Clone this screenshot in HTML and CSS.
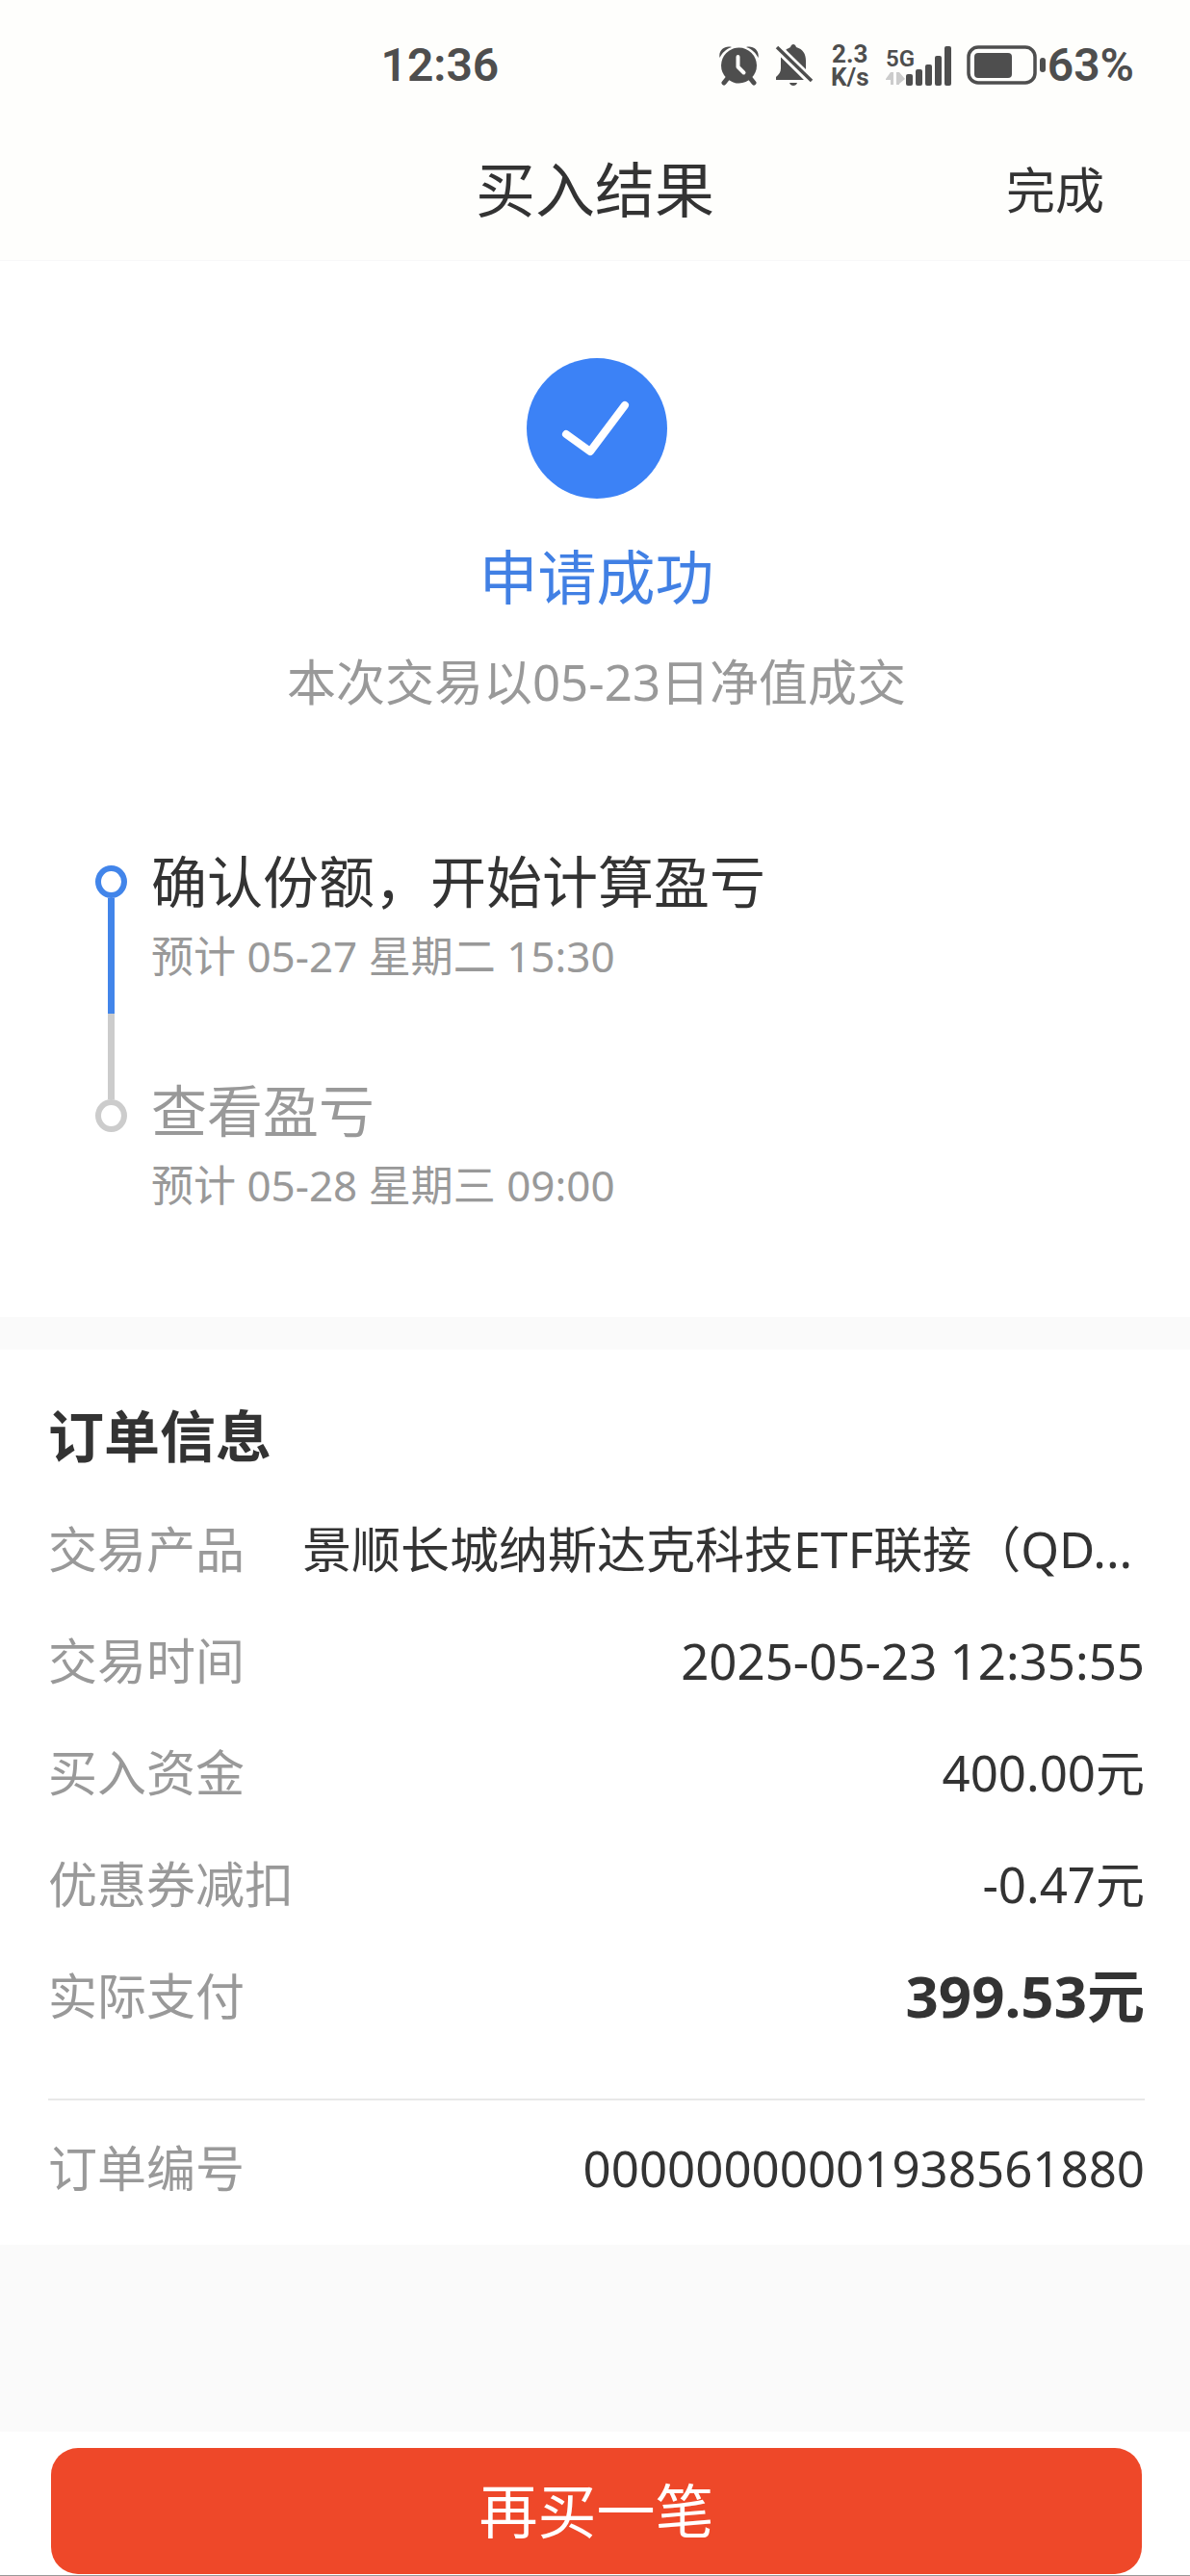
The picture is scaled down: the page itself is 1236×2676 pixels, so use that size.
FILE: index.html
```html
<!DOCTYPE html>
<html lang="zh-CN">
<head>
<meta charset="utf-8">
<meta name="viewport" content="width=device-width, initial-scale=1">
<title>买入结果</title>
<link rel="stylesheet" href="styles.css">
</head>
<body>
<header class="top">
  <div class="status">
    <time class="status-time">12:36</time>
    <div class="status-icons">
      <svg class="icon" width="41" height="42" viewBox="0 0 41 42" aria-hidden="true">
        <g stroke="#4e4e4e" stroke-width="5" stroke-linecap="round"><path d="M9 34l-4 5M32 34l4 5"/></g>
        <circle cx="20.500" cy="21" r="18.500" fill="#4e4e4e"/>
        <path d="M0.500 13C-1 5 6 0 13 2 7 4 3 8 0.500 13zM40.500 13C42 5 35 0 28 2c6 2 10 6 12.500 11z" fill="#4e4e4e"/>
        <path d="M19.500 12v10.500l6 6" fill="none" stroke="#fefefc" stroke-width="4" stroke-linecap="round" stroke-linejoin="round"/>
      </svg>
      <svg class="icon" width="42" height="44" viewBox="0 0 42 44" aria-hidden="true">
        <path d="M12 6C14 4 16 4 17 3c1-4 5-4 6 0 7 2 10 7 10 14v10zM7 13l24 24H2v-3c3-3 5-5 5-9zM16 40h8c-1 4-7 4-8 0z" fill="#4e4e4e"/>
        <path d="M4 4l35 34" stroke="#fefefc" stroke-width="9"/>
        <path d="M3 3l36 35" stroke="#4e4e4e" stroke-width="3.500"/>
      </svg>
      <div class="speed"><span>2.3</span><span>K/s</span></div>
      <svg class="icon" width="68" height="44" viewBox="0 0 68 44" role="img" aria-label="5G">
        <text class="network" x="0" y="23">5G</text>
        <g fill="#4e4e4e">
          <rect x="21" y="31" width="7" height="12" rx="2"/>
          <rect x="31" y="26" width="7" height="17" rx="2"/>
          <rect x="41" y="21" width="7" height="22" rx="2"/>
          <rect x="51" y="12" width="7" height="31" rx="2"/>
          <rect x="61" y="2" width="7" height="41" rx="2"/>
        </g>
        <path d="M0 36l5-7h3v13H5v-5H0zM11 29h3l6 7-6 5v1h-3z" fill="#ccc"/>
      </svg>
      <div class="battery">
        <svg class="icon" width="82" height="42" viewBox="0 0 82 42" aria-hidden="true">
          <rect x="2" y="2" width="69" height="37" rx="10" fill="none" stroke="#4e4e4e" stroke-width="3.500"/>
          <rect x="8" y="8" width="39" height="26" rx="4" fill="#4e4e4e"/>
          <rect x="76" y="13" width="6" height="15" rx="3" fill="#4e4e4e"/>
        </svg>
        <span>63%</span>
      </div>
    </div>
  </div>
  <nav class="nav">
    <h1 class="nav-title">买入结果</h1>
    <button class="nav-done" type="button">完成</button>
  </nav>
</header>

<main class="content">
  <section class="result">
    <svg class="result-icon" width="146" height="146" viewBox="0 0 146 146" aria-hidden="true">
      <circle cx="73" cy="73" r="73" fill="#3c82f6"/>
      <path d="M41 79l25 18 36-48" fill="none" stroke="#fff" stroke-width="8" stroke-linecap="round" stroke-linejoin="round"/>
    </svg>
    <h2 class="result-title">申请成功</h2>
    <p class="result-note">本次交易以05-23日净值成交</p>
    <ol class="steps">
      <li class="step step-active">
        <div class="rail"><i class="dot"></i><i class="line line-active"></i><i class="line line-rest"></i></div>
        <div class="step-body">
          <h3 class="step-title">确认份额，开始计算盈亏</h3>
          <p class="step-date">预计 05-27 星期二 15:30</p>
        </div>
      </li>
      <li class="step">
        <div class="rail"><i class="line line-stub"></i><i class="dot"></i></div>
        <div class="step-body">
          <h3 class="step-title">查看盈亏</h3>
          <p class="step-date">预计 05-28 星期三 09:00</p>
        </div>
      </li>
    </ol>
  </section>

  <section class="order">
    <h2 class="order-title">订单信息</h2>
    <dl class="rows">
      <div class="row row-product"><dt>交易产品</dt><dd>景顺长城纳斯达克科技ETF联接（QD...</dd></div>
      <div class="row"><dt>交易时间</dt><dd>2025-05-23 12:35:55</dd></div>
      <div class="row"><dt>买入资金</dt><dd>400.00元</dd></div>
      <div class="row"><dt>优惠券减扣</dt><dd>-0.47元</dd></div>
      <div class="row"><dt>实际支付</dt><dd class="total">399.53元</dd></div>
    </dl>
    <dl class="rows rows-id">
      <div class="row"><dt>订单编号</dt><dd>00000000001938561880</dd></div>
    </dl>
  </section>
</main>

<footer class="footer">
  <button class="buy" type="button">再买一笔</button>
</footer>
</body>
</html>
```

FILE: styles.css
```css
* {
  box-sizing: border-box;
  margin: 0;
  padding: 0;
}

body {
  min-height: 100vh;
  display: flex;
  flex-direction: column;
  background: #fafafa;
  color: #333;
  font-family: "Noto Sans", "Noto Sans CJK SC", sans-serif;
  font-size: 51px;
  line-height: 72px;
}

button {
  border: 0;
  font: inherit;
  color: inherit;
}

h1, h2, h3 {
  font-weight: 400;
}

.icon {
  display: block;
}

/* Status bar and navigation */
.top {
  background: #fefefc;
  border-bottom: 1px solid #f8f8f8;
}

.status {
  display: flex;
  align-items: center;
  justify-content: space-between;
  height: 136px;
  padding: 0 58px 0 32%;
  color: #4e4e4e;
  font-family: Roboto, sans-serif;
  font-size: 48px;
  font-weight: 600;
  line-height: 56px;
}

.status-icons {
  display: flex;
  align-items: center;
  gap: 16px;
}

.speed {
  display: flex;
  flex-direction: column;
  align-items: center;
  width: 42px;
  font-size: 26px;
  font-weight: 700;
  line-height: 24px;
}

.network {
  font-size: 24px;
  fill: #4e4e4e;
}

.battery {
  display: flex;
  align-items: center;
  gap: 2px;
}

.nav {
  display: grid;
  grid-template-columns: 1fr auto 1fr;
  align-items: center;
  height: 134px;
  padding: 0 89px 12px;
}

.nav-title {
  grid-column: 2;
  font-size: 62px;
  line-height: 84px;
}

.nav-done {
  justify-self: end;
  background: none;
}

/* Result summary */
.result {
  display: flex;
  flex-direction: column;
  align-items: center;
  padding: 101px 45px 107px 48px;
  background: #fff;
}

.result-title {
  margin-top: 40px;
  color: #4180e4;
  font-size: 61px;
  line-height: 84px;
}

.result-note {
  margin-top: 30px;
  color: #999;
}

/* Progress steps */
.steps {
  align-self: stretch;
  margin-top: 133px;
  padding-left: 51px;
  list-style: none;
}

.step {
  display: flex;
  gap: 25px;
  color: #999;
}

.step-active {
  min-height: 238px;
}

.rail {
  display: flex;
  flex-direction: column;
  align-items: center;
  width: 33px;
}

.dot {
  flex: none;
  width: 33px;
  height: 34px;
  border: 6px solid #ccc;
  border-radius: 50%;
}

.line {
  width: 7px;
  background: #ccc;
}

.line-active {
  height: 120px;
  background: #4285ea;
}

.line-rest {
  flex: 1;
}

.line-stub {
  height: 27px;
}

.step-active .rail {
  padding-top: 22px;
}

.step-active .dot {
  border-color: #4285ea;
}

.step-title {
  font-size: 58px;
  line-height: 78px;
}

.step-active .step-title {
  color: #333;
}

.step-date {
  margin-top: 8px;
  font-size: 44px;
  line-height: 60px;
}

/* Order details */
.order {
  margin-top: 34px;
  padding: 50px 47px 22px 50px;
  background: #fff;
}

.order-title {
  margin-bottom: 19px;
  font-size: 58px;
  font-weight: 700;
  line-height: 80px;
}

.row {
  display: flex;
  align-items: center;
  justify-content: space-between;
  height: 116px;
}

.row dt {
  color: #999;
}

.row dd {
  white-space: nowrap;
}

.row-product {
  justify-content: flex-start;
  gap: 60px;
}

.row .total {
  font-size: 60px;
  font-weight: 700;
}

.rows-id {
  margin-top: 49px;
  padding-top: 12px;
  border-top: 2px solid #e8e8e8;
}

/* Bottom action */
.footer {
  margin-top: auto;
  padding: 17px 50px 1px 53px;
  background: #fff;
  border-bottom: 1px solid #999;
}

.buy {
  display: block;
  width: 100%;
  height: 131px;
  border-radius: 28px;
  background: #ee4829;
  color: #fff;
  font-size: 61px;
}
```
